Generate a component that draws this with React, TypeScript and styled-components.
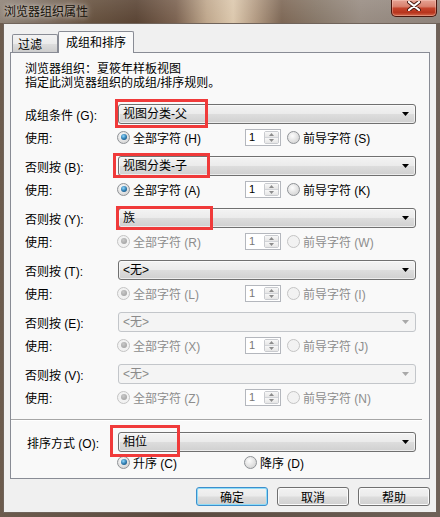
import styled, { createGlobalStyle } from 'styled-components';

const GlobalStyle = createGlobalStyle`
  html, body { margin: 0; padding: 0; background: #5f5047; }
  body {
    width: 440px;
    height: 517px;
    overflow: hidden;
    font-family: "Liberation Sans", "Noto Sans CJK SC", sans-serif;
    font-size: 12px;
    color: #000;
  }
`;

type GroupDef = {
  label: string;
  key: string;
  value: string;
  allKey: string;
  leadKey: string;
  comboDisabled?: boolean;
  optsDisabled?: boolean;
};

const groups: GroupDef[] = [
  { label: '成组条件', key: 'G', value: '视图分类-父', allKey: 'H', leadKey: 'S' },
  { label: '否则按', key: 'B', value: '视图分类-子', allKey: 'A', leadKey: 'K' },
  { label: '否则按', key: 'Y', value: '族', allKey: 'R', leadKey: 'W', optsDisabled: true },
  { label: '否则按', key: 'T', value: '<无>', allKey: 'L', leadKey: 'I', optsDisabled: true },
  { label: '否则按', key: 'E', value: '<无>', allKey: 'X', leadKey: 'J', optsDisabled: true, comboDisabled: true },
  { label: '否则按', key: 'V', value: '<无>', allKey: 'Z', leadKey: 'N', optsDisabled: true, comboDisabled: true },
];

// red annotation rectangles drawn over the screenshot
const marks = [
  { x: 115, y: 99, w: 93, h: 29 },
  { x: 113, y: 153, w: 97, h: 25 },
  { x: 116, y: 206, w: 97, h: 24 },
  { x: 110, y: 425, w: 70, h: 32 },
];

export default function App() {
  return (
    <>
      <GlobalStyle />
      <Window>
        <TitleBar>
          <TitleText>浏览器组织属性</TitleText>
          <CloseButton>
            <svg width="14" height="10" viewBox="0 0 14 10">
              <path d="M2 1 L12 9 M12 1 L2 9" stroke="#4a1a10" strokeWidth="4" strokeLinecap="round" />
              <path d="M2 1 L12 9 M12 1 L2 9" stroke="#fff" strokeWidth="2.2" strokeLinecap="round" />
            </svg>
          </CloseButton>
        </TitleBar>

        <Client>
          <TabStrip>
            <Tab $w={46} $pad={5}>过滤</Tab>
            <Tab $w={76} $pad={7} $active>成组和排序</Tab>
          </TabStrip>

          <Panel>
            <Description>
              <DescLine>浏览器组织：夏筱年样板视图</DescLine>
              <DescLine>指定此浏览器组织的成组/排序规则。</DescLine>
            </Description>

            {groups.map((g) => (
              <Group key={g.key}>
                <ComboRow>
                  <FieldLabel>
                    {g.label} ({g.key}):
                  </FieldLabel>
                  <Combo value={g.value} disabled={g.comboDisabled} />
                </ComboRow>
                <UseRow>
                  <UseLabel>使用:</UseLabel>
                  <Option $w={128} $disabled={g.optsDisabled}>
                    <Radio $checked $disabled={g.optsDisabled} />
                    全部字符 ({g.allKey})
                  </Option>
                  <Spin disabled={g.optsDisabled} />
                  <Option $disabled={g.optsDisabled} $gapLeft={6}>
                    <Radio $disabled={g.optsDisabled} />
                    前导字符 ({g.leadKey})
                  </Option>
                </UseRow>
              </Group>
            ))}

            <Separator />

            <ComboRow>
              <FieldLabel $indent={2}>排序方式 (O):</FieldLabel>
              <Combo value="相位" />
            </ComboRow>
            <SortRow>
              <UseLabel />
              <Option $w={127}>
                <Radio $checked />
                升序 (C)
              </Option>
              <Option>
                <Radio />
                降序 (D)
              </Option>
            </SortRow>
          </Panel>

          <ButtonRow>
            <DialogButton $default>确定</DialogButton>
            <DialogButton>取消</DialogButton>
            <DialogButton>帮助</DialogButton>
          </ButtonRow>
        </Client>

        <Annotations>
          {marks.map((m, i) => (
            <RedBox key={i} $x={m.x} $y={m.y} $w={m.w} $h={m.h} />
          ))}
        </Annotations>
      </Window>
    </>
  );
}

function Combo({ value, disabled }: { value: string; disabled?: boolean }) {
  return (
    <ComboBox $disabled={disabled}>
      <ComboText>{value}</ComboText>
      <svg width="7" height="4" viewBox="0 0 7 4">
        <polygon points="0,0 7,0 3.5,4" fill={disabled ? '#a8a8a8' : '#000'} />
      </svg>
    </ComboBox>
  );
}

function Spin({ disabled }: { disabled?: boolean }) {
  return (
    <SpinBox>
      <SpinValue $disabled={disabled}>1</SpinValue>
      <SpinButtons>
        <SpinHalf>
          <svg width="5" height="3" viewBox="0 0 5 3">
            <polygon points="2.5,0 5,3 0,3" fill="#8c8c8c" />
          </svg>
        </SpinHalf>
        <SpinHalf $bottom>
          <svg width="5" height="3" viewBox="0 0 5 3">
            <polygon points="0,0 5,0 2.5,3" fill="#8c8c8c" />
          </svg>
        </SpinHalf>
      </SpinButtons>
    </SpinBox>
  );
}

const Window = styled.div`
  position: relative;
  width: 440px;
  height: 517px;
  display: flex;
  flex-direction: column;
  background:
    linear-gradient(rgba(255, 255, 255, 0.1), rgba(255, 255, 255, 0)) top / 100% 23px no-repeat,
    linear-gradient(
        90deg,
        #8f8377 0%,
        #7c6c5f 10%,
        #67523f 20%,
        #5a4434 31%,
        #7b6250 40%,
        #bfa78c 47%,
        #dcc8ad 53%,
        #b39b83 58%,
        #7d6755 64%,
        #877869 72%,
        #988c82 82%,
        #8e837b 100%
      )
      top / 100% 23px no-repeat,
    linear-gradient(90deg, #6c5b4d, #5a4a3f 40%, #6e6158 100%);
`;

const TitleBar = styled.div`
  height: 23px;
  flex-shrink: 0;
  display: flex;
  align-items: flex-start;
`;

const TitleText = styled.div`
  padding: 3px 0 0 4px;
  line-height: 15px;
  font-family: "Noto Sans CJK SC", sans-serif;
  font-size: 12px;
  color: #161008;
  text-shadow: 0 0 5px rgba(255, 255, 255, 0.75), 0 0 10px rgba(255, 255, 255, 0.45);
`;

const CloseButton = styled.div`
  margin: 0 3px 0 auto;
  width: 46px;
  height: 17px;
  box-sizing: border-box;
  border: 1px solid #4a150c;
  border-top: none;
  border-radius: 0 0 5px 5px;
  background: linear-gradient(#e6a293 0%, #d9826f 40%, #c4432b 52%, #b7341d 78%, #d2694c 100%);
  box-shadow: inset 0 0 0 1px rgba(255, 220, 210, 0.35);
  display: flex;
  justify-content: center;
  padding-top: 1px;
`;

const Client = styled.div`
  flex: 1;
  margin: 0 3px 4px 3px;
  border: 1px solid #70645b;
  background: #f0f0f0;
  display: flex;
  flex-direction: column;
  padding: 7px 6px 0 6px;
`;

const TabStrip = styled.div`
  height: 21px;
  display: flex;
  align-items: flex-end;
  padding-left: 2px;
`;

const Tab = styled.div<{ $active?: boolean; $w: number; $pad: number }>`
  position: relative;
  z-index: 1;
  box-sizing: border-box;
  width: ${(p) => p.$w}px;
  height: ${(p) => (p.$active ? 22 : 18)}px;
  margin-bottom: ${(p) => (p.$active ? -1 : 0)}px;
  padding: 0 0 ${(p) => (p.$active ? 2 : 0)}px ${(p) => p.$pad}px;
  border: 1px solid #898c95;
  border-bottom: none;
  border-radius: 2px 2px 0 0;
  display: flex;
  align-items: center;
  font-family: "Noto Sans CJK SC", sans-serif;
  background: ${(p) =>
    p.$active ? '#f9f9f9' : 'linear-gradient(#f3f3f3 0%, #ebebeb 50%, #dedede 52%, #cdcdcd 100%)'};
`;

const Panel = styled.div`
  height: 427px;
  box-sizing: border-box;
  border: 1px solid #898c95;
  background: #f9f9f9;
  padding: 9px 13px 0 14px;
  display: flex;
  flex-direction: column;
`;

const Description = styled.div`
  display: flex;
  flex-direction: column;
  margin-bottom: 14px;
`;

const DescLine = styled.div`
  height: 14px;
  line-height: 14px;
  white-space: nowrap;
`;

const Group = styled.div`
  display: flex;
  flex-direction: column;
  margin-bottom: 10px;
`;

const ComboRow = styled.div`
  height: 20px;
  display: flex;
  align-items: center;
`;

const FieldLabel = styled.div<{ $indent?: number }>`
  width: 93px;
  flex-shrink: 0;
  box-sizing: border-box;
  padding-left: ${(p) => p.$indent ?? 0}px;
  white-space: nowrap;
`;

const ComboBox = styled.div<{ $disabled?: boolean }>`
  flex: 1;
  height: 20px;
  box-sizing: border-box;
  display: flex;
  align-items: center;
  padding: 0 6px 0 4px;
  border: 1px solid ${(p) => (p.$disabled ? '#c3c6ca' : '#707070')};
  border-radius: 3px;
  background: ${(p) =>
    p.$disabled ? '#f4f4f4' : 'linear-gradient(#f3f3f3 0%, #ebebeb 48%, #dddddd 52%, #d0d0d0 100%)'};
  box-shadow: inset 0 0 0 1px ${(p) => (p.$disabled ? 'transparent' : 'rgba(255,255,255,0.6)')};
  color: ${(p) => (p.$disabled ? '#8a8a8a' : '#000')};
`;

const ComboText = styled.span`
  flex: 1;
  line-height: 18px;
  white-space: nowrap;
`;

const UseRow = styled.div`
  height: 18px;
  margin-top: 4px;
  display: flex;
  align-items: center;
`;

const SortRow = styled.div`
  height: 16px;
  margin-top: 2px;
  display: flex;
  align-items: center;
`;

const UseLabel = styled.div`
  width: 92px;
  flex-shrink: 0;
`;

const Option = styled.div<{ $w?: number; $disabled?: boolean; $gapLeft?: number }>`
  display: flex;
  align-items: center;
  gap: 3px;
  width: ${(p) => (p.$w ? `${p.$w}px` : 'auto')};
  flex-shrink: 0;
  margin-left: ${(p) => p.$gapLeft ?? 0}px;
  white-space: nowrap;
  color: ${(p) => (p.$disabled ? '#8d8d8d' : '#000')};
`;

const Radio = styled.span<{ $checked?: boolean; $disabled?: boolean }>`
  position: relative;
  width: 13px;
  height: 13px;
  box-sizing: border-box;
  border-radius: 50%;
  flex-shrink: 0;
  border: 1px solid ${(p) => (p.$disabled ? '#c4c4c4' : '#8f9296')};
  background: ${(p) =>
    p.$disabled
      ? '#f2f2f2'
      : 'radial-gradient(circle at 40% 35%, #fdfdfd 0%, #e6e6e6 45%, #cbcbcb 100%)'};

  &::after {
    content: '';
    display: ${(p) => (p.$checked ? 'block' : 'none')};
    position: absolute;
    left: 2.5px;
    top: 2.5px;
    width: 6px;
    height: 6px;
    border-radius: 50%;
    background: ${(p) =>
      p.$disabled
        ? 'radial-gradient(circle at 40% 35%, #c8c8c8, #9a9a9a)'
        : 'radial-gradient(circle at 40% 35%, #8fd6fb 0%, #2a78ad 55%, #0f3d63 100%)'};
  }
`;

const SpinBox = styled.div`
  width: 36px;
  height: 17px;
  box-sizing: border-box;
  flex-shrink: 0;
  border: 1px solid #b4b7bd;
  background: #fff;
  display: flex;
  align-items: stretch;
`;

const SpinValue = styled.span<{ $disabled?: boolean }>`
  flex: 1;
  padding-left: 3px;
  line-height: 15px;
  font-size: 11px;
  color: ${(p) => (p.$disabled ? '#777' : '#000')};
`;

const SpinButtons = styled.div`
  width: 15px;
  margin: 1px 1px 1px 0;
  box-sizing: border-box;
  border: 1px solid #c9cbcf;
  border-radius: 2px;
  display: flex;
  flex-direction: column;
`;

const SpinHalf = styled.div<{ $bottom?: boolean }>`
  flex: 1;
  display: flex;
  align-items: center;
  justify-content: center;
  background: linear-gradient(#f7f7f7, #e6e6e6);
  border-top: ${(p) => (p.$bottom ? '1px solid #d2d4d8' : 'none')};
`;

const Separator = styled.div`
  height: 1px;
  margin: 3px -6px 11px -14px;
  background: #a6a6a6;
  border-bottom: 1px solid #fff;
`;

const ButtonRow = styled.div`
  display: flex;
  justify-content: flex-end;
  gap: 9px;
  margin-top: 8px;
`;

const DialogButton = styled.div<{ $default?: boolean }>`
  width: 72px;
  height: 19px;
  box-sizing: border-box;
  border: 1px solid ${(p) => (p.$default ? '#3c8fcd' : '#707070')};
  border-radius: 3px;
  background: linear-gradient(#f2f2f2 0%, #ebebeb 48%, #dddddd 52%, #cfcfcf 100%);
  box-shadow: inset 0 0 0 1px ${(p) => (p.$default ? '#8fdcf7' : '#fbfbfb')};
  display: flex;
  align-items: center;
  justify-content: center;
  font-family: "Noto Sans CJK SC", sans-serif;
  line-height: 17px;
`;

const Annotations = styled.div`
  position: absolute;
  inset: 0;
  pointer-events: none;
`;

const RedBox = styled.div<{ $x: number; $y: number; $w: number; $h: number }>`
  position: absolute;
  left: ${(p) => p.$x}px;
  top: ${(p) => p.$y}px;
  width: ${(p) => p.$w}px;
  height: ${(p) => p.$h}px;
  box-sizing: border-box;
  border: 3px solid #f03a3a;
`;
